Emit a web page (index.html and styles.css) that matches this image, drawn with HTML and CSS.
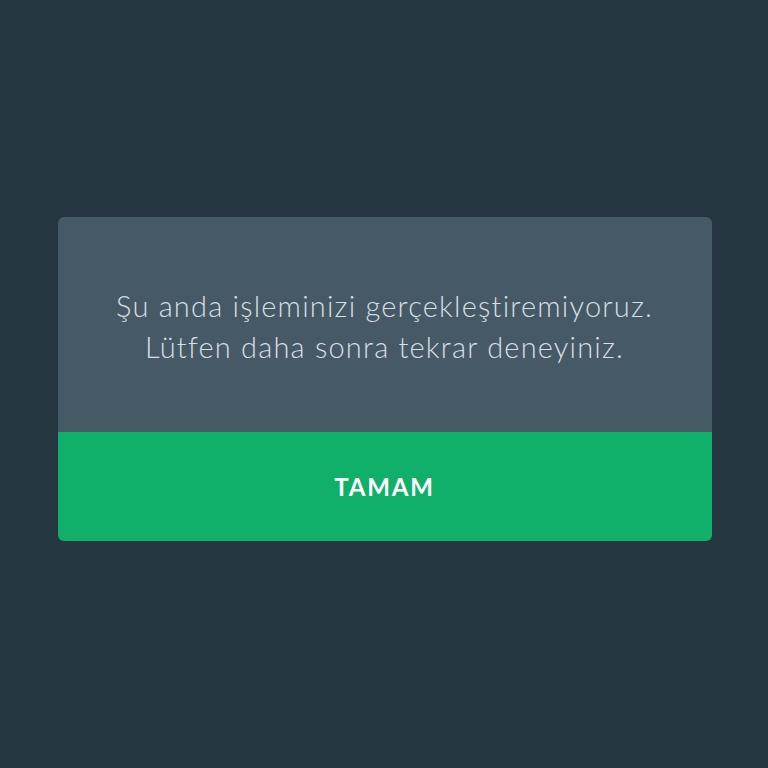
FILE: index.html
```
<!DOCTYPE html>
<html lang="tr">
<head>
<meta charset="utf-8">
<link rel="stylesheet" href="styles.css">
</head>
<body>
<div class="page">
  <div class="dialog">
    <div class="message">
      <p>Şu anda işleminizi gerçekleştiremiyoruz.<br>Lütfen daha sonra tekrar deneyiniz.</p>
    </div>
    <div class="action">TAMAM</div>
  </div>
</div>
</body>
</html>
```
FILE: styles.css
```
html, body {
  margin: 0;
  padding: 0;
  background: #263640;
  height: 100%;
}
.page {
  width: 768px;
  height: 768px;
  display: flex;
  justify-content: center;
  padding-top: 217px;
  box-sizing: border-box;
}
.dialog {
  width: 654px;
  height: 324px;
  margin-left: 1px;
  border-radius: 6px;
  overflow: hidden;
  display: flex;
  flex-direction: column;
  font-family: Lato, "Noto Sans", sans-serif;
}
.message {
  background: #465a65;
  height: 215px;
  display: flex;
  align-items: center;
  justify-content: center;
}
.message p {
  margin: 0;
  padding-top: 2px;
  text-align: center;
  color: #d6dfe4;
  font-size: 29px;
  font-weight: 300;
  line-height: 41px;
  letter-spacing: 1.2px;
}
.action {
  background: #11b06a;
  flex: 1;
  display: flex;
  align-items: center;
  justify-content: center;
  color: #ffffff;
  font-weight: 700;
  font-size: 24px;
  letter-spacing: 1.8px;
}
```
